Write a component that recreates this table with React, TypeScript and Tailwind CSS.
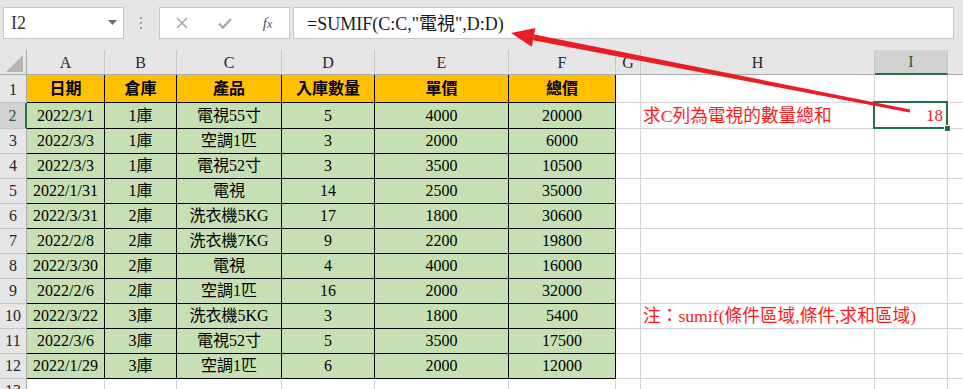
import React from "react";

type Row = [string, string, string, number, number, number];
const rows: Row[] = [
  ["2022/3/1", "1庫", "電視55寸", 5, 4000, 20000],
  ["2022/3/3", "1庫", "空調1匹", 3, 2000, 6000],
  ["2022/3/3", "1庫", "電視52寸", 3, 3500, 10500],
  ["2022/1/31", "1庫", "電視", 14, 2500, 35000],
  ["2022/3/31", "2庫", "洗衣機5KG", 17, 1800, 30600],
  ["2022/2/8", "2庫", "洗衣機7KG", 9, 2200, 19800],
  ["2022/3/30", "2庫", "電視", 4, 4000, 16000],
  ["2022/2/6", "2庫", "空調1匹", 16, 2000, 32000],
  ["2022/3/22", "3庫", "洗衣機5KG", 3, 1800, 5400],
  ["2022/3/6", "3庫", "電視52寸", 5, 3500, 17500],
  ["2022/1/29", "3庫", "空調1匹", 6, 2000, 12000],
];

const headers = ["日期", "倉庫", "產品", "入庫數量", "單價", "總價"];
const colLetters = ["A", "B", "C", "D", "E", "F", "G", "H", "I", ""];

function ColHeader({ label }: { label: string }) {
  if (label === "I") {
    return (
      <div className="bg-[#d2d2d2] border-r border-[#c6c6c6] border-b-2 border-b-[#217346] flex items-center justify-center text-[16px] text-[#1e5f3a] leading-none pt-[1px]">
        {label}
      </div>
    );
  }
  return (
    <div className="bg-[#e6e6e6] border-r border-[#c6c6c6] border-b border-b-[#ababab] flex items-center justify-center text-[16px] text-[#262626] leading-none pt-[2px] overflow-hidden">
      {label}
    </div>
  );
}

function RowHeader({ n, sel }: { n: number; sel?: boolean }) {
  if (sel) {
    return (
      <div className="bg-[#d2d2d2] border-r-2 border-r-[#217346] border-b border-[#c6c6c6] flex items-end justify-center text-[16px] text-[#1e5f3a] leading-[18px] pb-[3px]">
        {n}
      </div>
    );
  }
  return (
    <div className="bg-[#e6e6e6] border-r border-r-[#ababab] border-b border-[#c6c6c6] flex items-end justify-center text-[16px] text-[#262626] leading-[18px] pb-[3px] overflow-hidden">
      {n}
    </div>
  );
}

function HeadCell({ children }: { children: React.ReactNode }) {
  return (
    <div className="bg-[#ffc000] border-r border-b border-black flex items-end justify-center text-[16px] font-bold text-black leading-[18px] pb-[4px] whitespace-nowrap">
      {children}
    </div>
  );
}

function DataCell({ children }: { children: React.ReactNode }) {
  return (
    <div className="bg-[#c6e0b4] border-r border-b border-black flex items-end justify-center text-[16px] text-black leading-[18px] pb-[3px] whitespace-nowrap overflow-hidden">
      {children}
    </div>
  );
}

function Plain() {
  return <div className="bg-white border-r border-b border-[#d4d4d4]" />;
}

function NoteCell({ text, overflow }: { text: string; overflow?: boolean }) {
  return (
    <div
      className={
        overflow
          ? "bg-white border-r border-r-white border-b border-b-[#d4d4d4] relative z-[1] flex items-end text-[17.7px] text-[#ff1a1a] leading-[20px] pb-[2px] pl-[2px] whitespace-nowrap"
          : "bg-white border-r border-b border-[#d4d4d4] relative z-[1] flex items-end text-[17.7px] text-[#ff1a1a] leading-[20px] pb-[2px] pl-[2px] whitespace-nowrap"
      }
    >
      {text}
    </div>
  );
}

function SelectedCell() {
  return (
    <div className="bg-white border-r border-b border-[#d4d4d4] relative z-[2] flex items-end justify-end text-[17px] text-[#ff1a1a] leading-[20px] pb-[2px] pr-[4px]">
      18
      <div className="absolute -left-[2px] -top-[2px] w-[75px] h-[28px] border-2 border-[#217346]" />
      <div className="absolute -right-[4px] -bottom-[4px] w-[7px] h-[7px] bg-[#217346] border border-white" />
    </div>
  );
}

export default function App() {
  return (
    <div className="relative w-[963px] h-[389px] overflow-hidden bg-white text-black font-['Liberation_Serif','Noto_Sans_CJK_TC',serif]">
      {/* Formula bar */}
      <div className="h-[50px] bg-[#e6e6e6] flex items-start pt-[7px]">
        <div className="ml-[3px] w-[121px] h-[32px] bg-white border border-[#c6c6c6] flex items-center justify-between pl-[7px] pr-[6px]">
          <span className="text-[18px] text-[#333] leading-none">I2</span>
          <svg width="9" height="6" viewBox="0 0 9 6">
            <polygon points="0,0 9,0 4.5,5" fill="#6b6b6b" />
          </svg>
        </div>
        <div className="ml-[16px] mt-[10px] flex flex-col gap-[3px]">
          <div className="w-[2px] h-[2px] bg-[#a0a0a0]" />
          <div className="w-[2px] h-[2px] bg-[#a0a0a0]" />
          <div className="w-[2px] h-[2px] bg-[#a0a0a0]" />
        </div>
        <div className="ml-[17px] w-[131px] h-[32px] bg-white border border-[#c6c6c6] flex items-center">
          <div className="w-[43px] flex justify-center">
            <svg width="12" height="12" viewBox="0 0 12 12">
              <path d="M1 1 L11 11 M11 1 L1 11" stroke="#a8a8a8" strokeWidth="1.6" fill="none" />
            </svg>
          </div>
          <div className="w-[43px] flex justify-center">
            <svg width="14" height="11" viewBox="0 0 14 11">
              <path d="M1 5.5 L5 9.5 L13 1" stroke="#a8a8a8" strokeWidth="2.4" fill="none" />
            </svg>
          </div>
          <div className="w-[43px] flex justify-center">
            <span className="italic text-[15px] text-[#555] leading-none">
              f<span className="text-[12px]">x</span>
            </span>
          </div>
        </div>
        <div className="ml-[3px] w-[661px] h-[32px] bg-white border border-[#c6c6c6] flex items-center pl-[13px]">
          <span className="text-[18px] leading-none text-[#1a1a1a] whitespace-nowrap pt-[1px]">
            =SUMIF(C:C,"電視",D:D)
          </span>
        </div>
      </div>

      {/* Sheet grid */}
      <div className="grid grid-cols-[27px_78px_72px_105px_93px_134px_107px_25px_234px_73px_16px] grid-rows-[25px_28px_26px_repeat(10,25px)_25px]">
        <div className="bg-[#e6e6e6] border-r border-r-[#ababab] border-b border-b-[#ababab] flex items-end justify-end pr-[3px] pb-[2px]">
          <svg width="17" height="17" viewBox="0 0 17 17">
            <polygon points="17,0 17,17 0,17" fill="#b4b4b4" />
          </svg>
        </div>
        {colLetters.map((l, i) => (
          <ColHeader key={i} label={l} />
        ))}

        <RowHeader n={1} />
        {headers.map((h) => (
          <HeadCell key={h}>{h}</HeadCell>
        ))}
        <Plain />
        <Plain />
        <Plain />
        <Plain />

        {rows.map((r, i) => {
          const n = i + 2;
          return (
            <React.Fragment key={n}>
              <RowHeader n={n} sel={n === 2} />
              <DataCell>{r[0]}</DataCell>
              <DataCell>{r[1]}</DataCell>
              <DataCell>{r[2]}</DataCell>
              <DataCell>{r[3]}</DataCell>
              <DataCell>{r[4]}</DataCell>
              <DataCell>{r[5]}</DataCell>
              <Plain />
              {n === 2 ? (
                <NoteCell text="求C列為電視的數量總和" />
              ) : n === 10 ? (
                <NoteCell text="注：sumif(條件區域,條件,求和區域)" overflow />
              ) : (
                <Plain />
              )}
              {n === 2 ? <SelectedCell /> : <Plain />}
              <Plain />
            </React.Fragment>
          );
        })}

        <RowHeader n={13} />
        <Plain />
        <Plain />
        <Plain />
        <Plain />
        <Plain />
        <Plain />
        <Plain />
        <Plain />
        <Plain />
        <Plain />
      </div>

      {/* Red arrow annotation */}
      <svg className="absolute left-0 top-0 z-10 pointer-events-none" width="963" height="389" viewBox="0 0 963 389">
        <polygon points="534.2,34.5 910.3,109.5 909.7,112.5 533.0,40.3" fill="#ec1c24" />
        <polygon points="511,33 535.4,28.1 531.8,46.7" fill="#ec1c24" />
      </svg>
    </div>
  );
}
